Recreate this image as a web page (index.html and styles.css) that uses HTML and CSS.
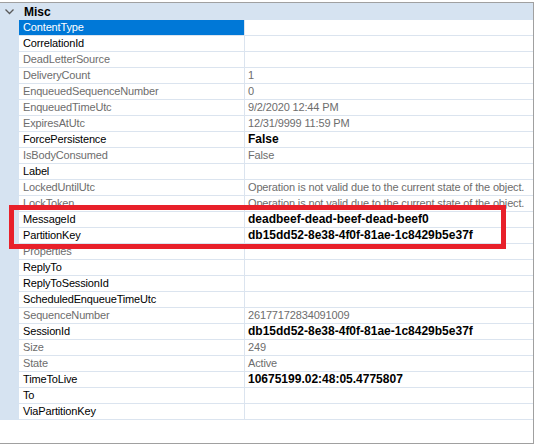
FILE: index.html
```html
<!DOCTYPE html>
<html lang="en">
<head>
  <meta charset="UTF-8">
  <title>Message Properties</title>
  <link rel="stylesheet" href="styles.css">
</head>
<body>

  <div class="property-grid">
    <div class="category-row">
      <span class="category-toggle">
        <svg width="9" height="6" viewBox="0 0 9 6"><path d="M0.5 0.5 L4.5 4.5 L8.5 0.5" fill="none" stroke="#5a5a5a" stroke-width="1.3"/></svg>
      </span>
      <span class="category-name">Misc</span>
    </div>

    <div class="rows">
      <div class="prop-row selected"><span class="prop-name">ContentType</span><span class="prop-value"></span></div>
      <div class="prop-row"><span class="prop-name">CorrelationId</span><span class="prop-value"></span></div>
      <div class="prop-row readonly"><span class="prop-name">DeadLetterSource</span><span class="prop-value"></span></div>
      <div class="prop-row readonly"><span class="prop-name">DeliveryCount</span><span class="prop-value">1</span></div>
      <div class="prop-row readonly"><span class="prop-name">EnqueuedSequenceNumber</span><span class="prop-value">0</span></div>
      <div class="prop-row readonly"><span class="prop-name">EnqueuedTimeUtc</span><span class="prop-value">9/2/2020 12:44 PM</span></div>
      <div class="prop-row readonly"><span class="prop-name">ExpiresAtUtc</span><span class="prop-value">12/31/9999 11:59 PM</span></div>
      <div class="prop-row"><span class="prop-name">ForcePersistence</span><span class="prop-value changed">False</span></div>
      <div class="prop-row readonly"><span class="prop-name">IsBodyConsumed</span><span class="prop-value">False</span></div>
      <div class="prop-row"><span class="prop-name">Label</span><span class="prop-value"></span></div>
      <div class="prop-row readonly"><span class="prop-name">LockedUntilUtc</span><span class="prop-value">Operation is not valid due to the current state of the object.</span></div>
      <div class="prop-row readonly"><span class="prop-name">LockToken</span><span class="prop-value">Operation is not valid due to the current state of the object.</span></div>
      <div class="prop-row"><span class="prop-name">MessageId</span><span class="prop-value changed">deadbeef-dead-beef-dead-beef0</span></div>
      <div class="prop-row"><span class="prop-name">PartitionKey</span><span class="prop-value changed">db15dd52-8e38-4f0f-81ae-1c8429b5e37f</span></div>
      <div class="prop-row readonly"><span class="prop-name">Properties</span><span class="prop-value"></span></div>
      <div class="prop-row"><span class="prop-name">ReplyTo</span><span class="prop-value"></span></div>
      <div class="prop-row"><span class="prop-name">ReplyToSessionId</span><span class="prop-value"></span></div>
      <div class="prop-row"><span class="prop-name">ScheduledEnqueueTimeUtc</span><span class="prop-value"></span></div>
      <div class="prop-row readonly"><span class="prop-name">SequenceNumber</span><span class="prop-value">26177172834091009</span></div>
      <div class="prop-row"><span class="prop-name">SessionId</span><span class="prop-value changed">db15dd52-8e38-4f0f-81ae-1c8429b5e37f</span></div>
      <div class="prop-row readonly"><span class="prop-name">Size</span><span class="prop-value">249</span></div>
      <div class="prop-row readonly"><span class="prop-name">State</span><span class="prop-value">Active</span></div>
      <div class="prop-row"><span class="prop-name">TimeToLive</span><span class="prop-value changed">10675199.02:48:05.4775807</span></div>
      <div class="prop-row"><span class="prop-name">To</span><span class="prop-value"></span></div>
      <div class="prop-row"><span class="prop-name">ViaPartitionKey</span><span class="prop-value"></span></div>
    </div>

    <!-- highlight around the two key rows -->
    <div class="highlight"></div>
  </div>

</body>
</html>
```

FILE: styles.css
```css
body {
  margin: 0;
  background-color: white;
  font-family: "Liberation Sans", Arial, sans-serif;
  font-size: 11px;
  letter-spacing: -0.15px;
}

.property-grid {
  position: relative;
  width: 533px;
  height: 440px;
  margin-top: 2px;
  border-top: 1px solid #a0a0a0;
  border-right: 1px solid #a0a0a0;
  border-bottom: 1px solid #a0a0a0;
  background-color: white;
}

.category-row {
  display: flex;
  align-items: center;
  height: 17px;
  background-color: #d6e3f1;
}

.category-toggle {
  display: flex;
  width: 19px;
  justify-content: center;
  padding-top: 1px;
}

.category-name {
  margin-left: 5px;
  font-weight: bold;
  font-size: 12px;
  letter-spacing: 0;
  color: black;
}

.rows {
  padding-left: 19px;
  background-color: #d6e3f1;
}

.prop-row {
  display: flex;
  height: 15px;
  line-height: 15px;
  border-bottom: 1px solid #dbe4ef;
  background-color: white;
  color: black;
}

.prop-name {
  width: 221px;
  padding-left: 4px;
  border-right: 1px solid #dbe4ef;
  white-space: nowrap;
  overflow: hidden;
}

.prop-value {
  flex: 1;
  padding-left: 3px;
  white-space: nowrap;
  overflow: hidden;
}

.readonly {
  color: #6d6d6d;
}

.changed {
  font-weight: bold;
  font-size: 12px;
  letter-spacing: 0;
  color: black;
}

.selected .prop-name {
  background-color: #0078d7;
  color: white;
}

.highlight {
  position: absolute;
  left: 9px;
  top: 202px;
  width: 487px;
  height: 34px;
  border: 5px solid #e8202a;
}
```
